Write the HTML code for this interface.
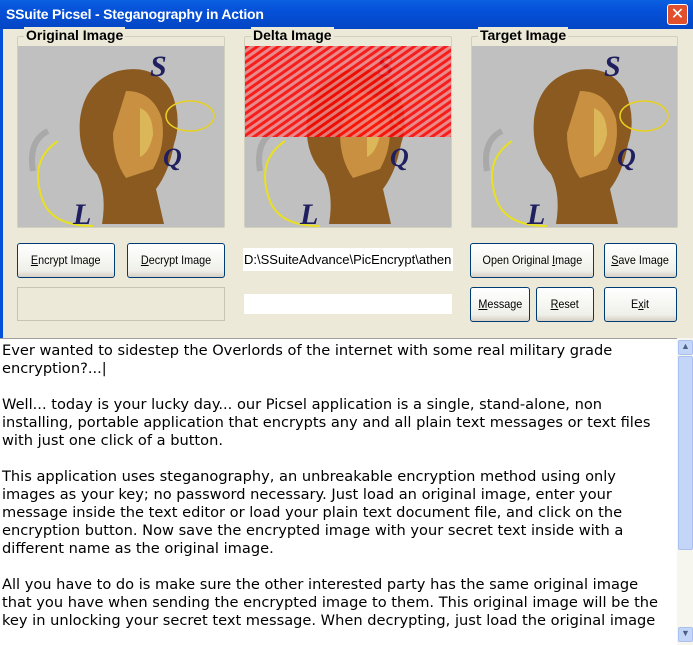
<!DOCTYPE html>
<html><head><style>
*{margin:0;padding:0;box-sizing:border-box}
body{width:693px;height:645px;overflow:hidden;background:#ece9d8;font-family:"Liberation Sans",sans-serif;position:relative}
.title{position:absolute;left:0;top:0;width:693px;height:29px;background:linear-gradient(#0a5fe0,#0550d8 40%,#0346c4);color:#fff;font-weight:bold;font-size:14px;padding:6px 0 0 6px;letter-spacing:-0.2px}
.close{position:absolute;right:5px;top:4px;width:21px;height:21px;background:#e0502c;border:1px solid #fff;border-radius:3px;color:#fff;font-size:16px;text-align:center;line-height:19px}
.lb{position:absolute;left:0;top:29px;width:3px;height:616px;background:#0550d8}
.grp{position:absolute;border:1px solid #d0d0bf;border-radius:2px}
.gl{position:absolute;background:#ece9d8;font-weight:bold;font-size:14px;padding:0 2px;top:-10px;left:6px}
.img{position:absolute;background:#c0c0c0;overflow:hidden}
.btn{position:absolute;border:1px solid #003c74;border-radius:3px;background:linear-gradient(#fff,#f0f0ea 80%,#d6d0c5);font-size:12px;text-align:center;font-family:"Liberation Sans Narrow","Liberation Sans",sans-serif}
.btn span{display:inline-block;transform:scaleX(.9)}
.field{position:absolute;background:#fff}
.txt{position:absolute;left:0;top:338px;width:677px;height:307px;background:#fff;border-top:1px solid #a0a0a0;font-family:"DejaVu Sans",sans-serif;font-size:14.6px;line-height:18px;padding:3px 0 0 2px;color:#000;white-space:nowrap;overflow:hidden}
.sb{position:absolute;left:677px;top:338px;width:16px;height:307px;background:#f6f5ee}
</style></head><body>
<div class="title">SSuite Picsel - Steganography in Action</div>
<div class="close">✕</div>
<div class="lb"></div>
<svg width="0" height="0" style="position:absolute">
<defs>
<g id="st">
<path d="M40 95 q-30 20 -15 60 q10 25 50 25" stroke="#e8e020" stroke-width="2" fill="none"/>
<path d="M30 85 q-20 10 -15 40" stroke="#999" stroke-width="6" fill="none" opacity=".6"/>
<path d="M100 25 q35 -8 52 18 q13 28 4 55 q-5 28 -18 45 l8 35 l-62 0 q5 -30 -5 -50 q-20 -20 -17 -55 q5 -38 38 -48z" fill="#8a5a20"/>
<path d="M108 45 q27 0 36 28 q4 27 -9 50 l-27 9 q-13 -18 -13 -45z" fill="#c89040"/>
<path d="M122 62 q13 5 13 27 q-4 18 -13 22" fill="#e0c060" opacity=".8"/>
<ellipse cx="172" cy="70" rx="24" ry="15" fill="none" stroke="#e8d020" stroke-width="1.5"/>
<text x="132" y="30" font-family="Liberation Serif" font-style="italic" font-weight="bold" font-size="30" fill="#202060">S</text>
<text x="145" y="120" font-family="Liberation Serif" font-style="italic" font-weight="bold" font-size="26" fill="#202060">Q</text>
<text x="55" y="178" font-family="Liberation Serif" font-style="italic" font-weight="bold" font-size="30" fill="#202060">L</text>
</g>
<pattern id="hp" width="6" height="6" patternUnits="userSpaceOnUse" patternTransform="rotate(-35)"><rect width="6" height="6" fill="#f08080"/><rect width="6" height="3" fill="#ff0000"/></pattern>
</defs></svg>

<div class="grp" style="left:17px;top:36px;width:208px;height:192px"><div class="gl">Original Image</div></div>
<div class="img" style="left:18px;top:46px;width:206px;height:181px"><svg width="206" height="181"><use href="#st"/></svg></div>
<div class="grp" style="left:244px;top:36px;width:208px;height:192px"><div class="gl">Delta Image</div></div>
<div class="img" style="left:245px;top:46px;width:206px;height:181px"><svg width="206" height="181"><use href="#st"/><rect width="206" height="91" fill="url(#hp)" opacity=".85"/></svg></div>
<div class="grp" style="left:471px;top:36px;width:207px;height:192px"><div class="gl">Target Image</div></div>
<div class="img" style="left:472px;top:46px;width:205px;height:181px"><svg width="206" height="181"><use href="#st"/></svg></div>

<div class="btn" style="left:17px;top:243px;width:98px;height:35px;line-height:33px"><span><u>E</u>ncrypt Image</span></div>
<div class="btn" style="left:127px;top:243px;width:98px;height:35px;line-height:33px"><span><u>D</u>ecrypt Image</span></div>
<div class="field" style="left:243px;top:248px;width:210px;height:23px;font-size:13px;line-height:23px;padding-left:1px">D:\SSuiteAdvance\PicEncrypt\athen</div>
<div class="btn" style="left:470px;top:243px;width:124px;height:35px;line-height:33px"><span>Open Original <u>I</u>mage</span></div>
<div class="btn" style="left:604px;top:243px;width:73px;height:35px;line-height:33px"><span><u>S</u>ave Image</span></div>
<div style="position:absolute;left:17px;top:287px;width:208px;height:34px;border:1px solid #c8c4b4"></div>
<div class="field" style="left:244px;top:294px;width:208px;height:20px"></div>
<div class="btn" style="left:470px;top:287px;width:60px;height:35px;line-height:33px"><span><u>M</u>essage</span></div>
<div class="btn" style="left:536px;top:287px;width:58px;height:35px;line-height:33px"><span><u>R</u>eset</span></div>
<div class="btn" style="left:604px;top:287px;width:73px;height:35px;line-height:33px"><span>E<u>x</u>it</span></div>

<div class="txt">Ever wanted to sidestep the Overlords of the internet with some real military grade<br>encryption?...|<br><br>Well... today is your lucky day... our Picsel application is a single, stand-alone, non<br>installing, portable application that encrypts any and all plain text messages or text files<br>with just one click of a button.<br><br>This application uses steganography, an unbreakable encryption method using only<br>images as your key; no password necessary. Just load an original image, enter your<br>message inside the text editor or load your plain text document file, and click on the<br>encryption button. Now save the encrypted image with your secret text inside with a<br>different name as the original image.<br><br>All you have to do is make sure the other interested party has the same original image<br>that you have when sending the encrypted image to them. This original image will be the<br>key in unlocking your secret text message. When decrypting, just load the original image</div>
<div class="sb">
<div style="position:absolute;left:1px;top:2px;width:15px;height:15px;background:#c4d6f8;border:1px solid #a8bff0;border-radius:2px;font-size:9px;text-align:center;color:#4d6185">▲</div>
<div style="position:absolute;left:1px;top:18px;width:15px;height:194px;background:#c4d6f8;border:1px solid #a8bff0;border-radius:2px"></div>
<div style="position:absolute;left:1px;top:289px;width:15px;height:15px;background:#c4d6f8;border:1px solid #a8bff0;border-radius:2px;font-size:9px;text-align:center;color:#4d6185">▼</div>
</div>
</body></html>
